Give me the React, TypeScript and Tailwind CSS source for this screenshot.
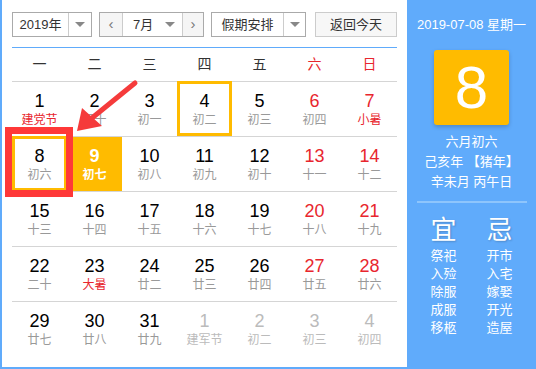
import React from 'react';

type Day = { n: number; sub: string; kind?: 'we' | 'fest' | 'wefest' | 'next' };

const rows: Day[][] = [
  [
    { n: 1, sub: '建党节', kind: 'fest' },
    { n: 2, sub: '三十' },
    { n: 3, sub: '初一' },
    { n: 4, sub: '初二' },
    { n: 5, sub: '初三' },
    { n: 6, sub: '初四', kind: 'we' },
    { n: 7, sub: '小暑', kind: 'wefest' },
  ],
  [
    { n: 8, sub: '初六' },
    { n: 9, sub: '初七' },
    { n: 10, sub: '初八' },
    { n: 11, sub: '初九' },
    { n: 12, sub: '初十' },
    { n: 13, sub: '十一', kind: 'we' },
    { n: 14, sub: '十二', kind: 'we' },
  ],
  [
    { n: 15, sub: '十三' },
    { n: 16, sub: '十四' },
    { n: 17, sub: '十五' },
    { n: 18, sub: '十六' },
    { n: 19, sub: '十七' },
    { n: 20, sub: '十八', kind: 'we' },
    { n: 21, sub: '十九', kind: 'we' },
  ],
  [
    { n: 22, sub: '二十' },
    { n: 23, sub: '大暑', kind: 'fest' },
    { n: 24, sub: '廿二' },
    { n: 25, sub: '廿三' },
    { n: 26, sub: '廿四' },
    { n: 27, sub: '廿五', kind: 'we' },
    { n: 28, sub: '廿六', kind: 'we' },
  ],
  [
    { n: 29, sub: '廿七' },
    { n: 30, sub: '廿八' },
    { n: 31, sub: '廿九' },
    { n: 1, sub: '建军节', kind: 'next' },
    { n: 2, sub: '初二', kind: 'next' },
    { n: 3, sub: '初三', kind: 'next' },
    { n: 4, sub: '初四', kind: 'next' },
  ],
];

const weekdays = ['一', '二', '三', '四', '五', '六', '日'];
const yi = ['祭祀', '入殓', '除服', '成服', '移柩'];
const ji = ['开市', '入宅', '嫁娶', '开光', '造屋'];

const Caret = () => (
  <span className="w-0 h-0 border-x-[5px] border-x-transparent border-t-[5px] border-t-[#888]" />
);

const Cell: React.FC<{ d: Day; ri: number; ci: number }> = ({ d, ri, ci }) => {
  const hover = ri === 0 && ci === 3;
  const selected = ri === 1 && ci === 0;
  const today = ri === 1 && ci === 1;
  let numCls = 'text-black';
  let subCls = 'text-[#999]';
  if (d.kind === 'we') numCls = 'text-[#e8262e]';
  if (d.kind === 'fest') subCls = 'text-[#e8262e]';
  if (d.kind === 'wefest') {
    numCls = 'text-[#e8262e]';
    subCls = 'text-[#e8262e]';
  }
  if (d.kind === 'next') {
    numCls = 'text-[#bbb]';
    subCls = 'text-[#bbb]';
  }
  if (today) {
    numCls = 'text-white font-bold';
    subCls = 'text-white font-bold';
  }
  return (
    <div className={`relative flex flex-col items-center ${today ? 'bg-[#ffbb00]' : ''}`}>
      {(hover || selected) && (
        <div className="absolute inset-x-0 bottom-0 -top-px border-[3px] border-[#ffbb00]" />
      )}
      <span className={`mt-[8px] text-[18px] leading-[22px] ${numCls}`}>{d.n}</span>
      <span className={`text-[12px] leading-[16px] ${subCls}`}>{d.sub}</span>
    </div>
  );
};

export default function App() {
  return (
    <div
      className="relative w-[536px] h-[369px] flex bg-white border-l-2 border-b-2 border-[#60abfb] overflow-hidden"
      style={{ fontFamily: '"Liberation Sans", Arial, "Noto Sans CJK SC", sans-serif' }}
    >
      <div className="w-[405px] pl-[10px] pt-[12px]">
        <div className="flex items-center h-[25px] text-[13px] text-[#333]">
          <div className="flex h-[25px] w-[80px] border border-[#aaa]">
            <span className="w-[55px] flex items-center justify-center">2019年</span>
            <span className="flex-1 flex items-center justify-center border-l border-[#ccc]">
              <Caret />
            </span>
          </div>
          <div className="flex h-[25px] w-[105px] ml-[7px] border border-[#aaa]">
            <span className="w-[22px] flex items-center justify-center bg-[#f5f5f5] text-[#777] text-[15px]">‹</span>
            <span className="w-[61px] flex items-center justify-between pl-[10px] pr-[7px] border-x border-[#ccc]">
              <span>7月</span>
              <Caret />
            </span>
            <span className="flex-1 flex items-center justify-center bg-[#f5f5f5] text-[#777] text-[15px]">›</span>
          </div>
          <div className="flex h-[25px] w-[95px] ml-[7px] border border-[#aaa]">
            <span className="w-[71px] flex items-center justify-center">假期安排</span>
            <span className="flex-1 flex items-center justify-center border-l border-[#ccc]">
              <Caret />
            </span>
          </div>
          <div className="flex h-[25px] w-[82px] ml-[9px] items-center justify-center border border-[#ccc] bg-[#f7f7f7]">
            返回今天
          </div>
        </div>
        <div className="w-[385px] mt-[10px] h-px bg-[#60abfb]" />
        <div className="w-[385px] grid grid-cols-7 h-[33px] items-center text-[14px] text-[#333]">
          {weekdays.map((w, i) => (
            <span key={w} className={`text-center ${i >= 5 ? 'text-[#e8262e]' : ''}`}>
              {w}
            </span>
          ))}
        </div>
        <div className="w-[385px]">
          {rows.map((r, ri) => (
            <div key={ri} className="grid grid-cols-7 h-[55px] border-t border-[#d5d5d5]">
              {r.map((d, ci) => (
                <Cell key={ci} d={d} ri={ri} ci={ci} />
              ))}
            </div>
          ))}
        </div>
      </div>

      <div className="flex-1 bg-[#60abfb] text-white flex flex-col items-center">
        <div className="mt-[16px] text-[13px] leading-[18px]">2019-07-08 星期一</div>
        <div className="mt-[16px] w-[75px] h-[75px] rounded-[3px] bg-[#ffbb00] shadow-[0_2px_4px_rgba(0,0,0,0.2)] flex items-center justify-center text-[60px] font-light leading-none">
          8
        </div>
        <div className="mt-[7px] text-[13px] leading-[20px] text-center">
          <div>六月初六</div>
          <div>己亥年 【猪年】</div>
          <div>辛未月 丙午日</div>
        </div>
        <div className="mt-[9px] w-[110px] h-[2px] bg-[#8ec5fc]" />
        <div className="mt-[12px] flex gap-[30px]">
          <div className="flex flex-col items-center w-[26px]">
            <span className="text-[26px] leading-[30px] [text-shadow:1px_1px_2px_rgba(0,0,0,0.2)]">宜</span>
            <div className="mt-[2px] flex flex-col items-center text-[13px] leading-[18px]">
              {yi.map((t) => (
                <span key={t}>{t}</span>
              ))}
            </div>
          </div>
          <div className="flex flex-col items-center w-[26px]">
            <span className="text-[26px] leading-[30px] [text-shadow:1px_1px_2px_rgba(0,0,0,0.2)]">忌</span>
            <div className="mt-[2px] flex flex-col items-center text-[13px] leading-[18px]">
              {ji.map((t) => (
                <span key={t}>{t}</span>
              ))}
            </div>
          </div>
        </div>
      </div>

      {/* annotation: red box + arrow */}
      <div className="absolute left-[3px] top-[127px] w-[68px] h-[70px] border-[7px] border-[#ff3838]" />
      <svg className="absolute left-0 top-0 pointer-events-none" width="536" height="369">
        <line x1="133" y1="83" x2="90" y2="118" stroke="#f53b3b" strokeWidth="5" strokeLinecap="round" />
        <polygon points="75,131 80,108 100,126" fill="#f53b3b" />
      </svg>
    </div>
  );
}
